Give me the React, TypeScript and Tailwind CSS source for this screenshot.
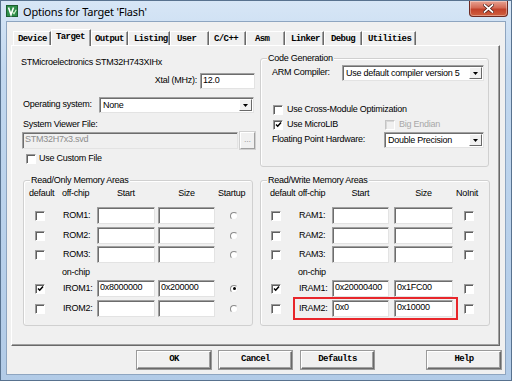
import React from 'react';

const sans = "font-['Liberation_Sans',Arial,sans-serif] text-[9px] tracking-[-0.25px] text-black";
const mono = "font-['Liberation_Mono','Courier_New',monospace] text-[9px] font-bold tracking-[-0.6px] text-black";

const tabs = [
  { label: 'Device', w: 'w-[38px]', pl: 'pl-[4px]' },
  { label: 'Target', w: 'w-[40px]', pl: 'pl-[4px]', active: true },
  { label: 'Output', w: 'w-[37px]', pl: 'pl-[3px]' },
  { label: 'Listing', w: 'w-[42px]', pl: 'pl-[5px]' },
  { label: 'User', w: 'w-[39px]', pl: 'pl-[6px]' },
  { label: 'C/C++', w: 'w-[37px]', pl: 'pl-[4px]' },
  { label: 'Asm', w: 'w-[39px]', pl: 'pl-[8px]' },
  { label: 'Linker', w: 'w-[39px]', pl: 'pl-[5px]' },
  { label: 'Debug', w: 'w-[38px]', pl: 'pl-[6px]' },
  { label: 'Utilities', w: 'w-[54px]', pl: 'pl-[5px]' },
];

function Check({ on, disabled }: { on?: boolean; disabled?: boolean }) {
  return (
    <div
      className={`w-[10px] h-[10px] shrink-0 border flex items-center justify-center ${
        disabled
          ? 'bg-[#f0f0f0] border-t-[#c4c4c4] border-l-[#c4c4c4] border-b-white border-r-white shadow-[inset_1px_1px_0_#d8d8d8]'
          : 'bg-white border-t-[#9a9a9a] border-l-[#9a9a9a] border-b-white border-r-white shadow-[inset_1px_1px_0_#5f5f5f]'
      }`}
    >
      {on && (
        <svg width="7" height="7" viewBox="0 0 7 7">
          <path d="M1 3.4 L2.7 5.2 L6 1.4" stroke="#000" strokeWidth="1.5" fill="none" />
        </svg>
      )}
    </div>
  );
}

function Radio({ on }: { on?: boolean }) {
  return (
    <div className="w-[8px] h-[8px] rounded-full bg-white border border-t-[#8a8a8a] border-l-[#8a8a8a] border-b-[#eeeeee] border-r-[#eeeeee] flex items-center justify-center">
      {on && <div className="w-[3px] h-[3px] rounded-full bg-black" />}
    </div>
  );
}

function Field({ className, value, disabled }: { className: string; value?: string; disabled?: boolean }) {
  return (
    <div
      className={`h-[17px] shrink-0 border border-t-[#a0a0a0] border-l-[#a0a0a0] border-b-[#e3e3e3] border-r-[#e3e3e3] shadow-[inset_1px_1px_0_#6d6d6d] pl-[2px] leading-[13px] ${
        disabled ? 'bg-[#f0f0f0] text-[#8d8d8d]' : 'bg-white'
      } ${className}`}
    >
      {value}
    </div>
  );
}

function Select({ className, value }: { className: string; value: string }) {
  return (
    <div
      className={`h-[16px] shrink-0 bg-white border border-t-[#a0a0a0] border-l-[#a0a0a0] border-b-[#e3e3e3] border-r-[#e3e3e3] shadow-[inset_1px_1px_0_#6d6d6d] flex ${className}`}
    >
      <span className="flex-1 pl-[3px] leading-[14px] truncate">{value}</span>
      <div className="w-[13px] my-[1px] mr-[1px] bg-[#f0f0f0] border border-t-white border-l-white border-b-[#696969] border-r-[#696969] flex items-center justify-center">
        <svg width="5" height="3" viewBox="0 0 5 3">
          <path d="M0 0H5L2.5 3Z" fill="#000" />
        </svg>
      </div>
    </div>
  );
}

function Group({ title, className, children }: { title: string; className: string; children?: React.ReactNode }) {
  return (
    <div className={`border border-[#d0d0d0] rounded-[3px] shadow-[inset_1px_1px_0_#ffffff] ${className}`}>
      <div className="-mt-[7px] ml-[6px] px-[1px] w-fit h-[13px] leading-[13px] bg-[#f0f0f0]">{title}</div>
      {children}
    </div>
  );
}

function Button({ label, className }: { label: string; className: string }) {
  return (
    <div
      className={`h-[18px] bg-[#f0f0f0] border border-t-white border-l-white border-b-[#696969] border-r-[#696969] shadow-[inset_-1px_-1px_0_#a0a0a0,0_0_0_1px_#9a9a9a] flex items-center justify-center ${mono} ${className}`}
    >
      {label}
    </div>
  );
}

const romRows = [
  { label: 'ROM1:', mt: 'mt-[7px]' },
  { label: 'ROM2:', mt: 'mt-[3px]' },
  { label: 'ROM3:', mt: 'mt-[2px]' },
];

const ramRows = [
  { label: 'RAM1:', mt: 'mt-[7px]' },
  { label: 'RAM2:', mt: 'mt-[3px]' },
  { label: 'RAM3:', mt: 'mt-[2px]' },
];

function RomRow({ label, mt, start, size, checked, startup }: { label: string; mt: string; start?: string; size?: string; checked?: boolean; startup?: boolean }) {
  return (
    <div className={`grid grid-cols-[33px_35px_61px_60px_1fr] items-center h-[17px] ${mt}`}>
      <div className="pl-[6px]"><Check on={checked} /></div>
      <div className="pl-[1px]">{label}</div>
      <Field className="w-[58px]" value={start} />
      <Field className="w-[57px]" value={size} />
      <div className="pl-[12px]"><Radio on={startup} /></div>
    </div>
  );
}

function RamRow({ label, mt, start, size, checked }: { label: string; mt: string; start?: string; size?: string; checked?: boolean }) {
  return (
    <div className={`grid grid-cols-[28px_34px_62px_62px_1fr] items-center h-[17px] ${mt}`}>
      <div className="pl-[1px]"><Check on={checked} /></div>
      <div className="pl-[1px]">{label}</div>
      <Field className="w-[57px]" value={start} />
      <Field className="w-[59px]" value={size} />
      <div className="pl-[8px]"><Check /></div>
    </div>
  );
}

function TitleIcon() {
  return (
    <svg width="12" height="12" viewBox="0 0 12 12">
      <rect x="0.5" y="0.5" width="11" height="11" fill="#2f8f4a" stroke="#1d5e30" />
      <path d="M2.5 2.5 L5 9.5 L7.5 2.5" stroke="#fff" strokeWidth="1.6" fill="none" />
      <path d="M6.5 7 L8 8.8 L10.2 4.8" stroke="#d9f5d0" strokeWidth="1.1" fill="none" />
    </svg>
  );
}

export default function App() {
  return (
    <div className="w-[512px] h-[381px] overflow-hidden border border-[#58728f] bg-[linear-gradient(180deg,#d7e6f6_0%,#c2d8ef_18%,#b9d1eb_60%,#b2cbe7_100%)]">
      {/* title bar */}
      <div className="h-[20px] flex items-start">
        <div className="ml-[5px] mt-[4px]"><TitleIcon /></div>
        <div className="ml-[5px] mt-[4px] h-[14px] leading-[14px] font-['Noto_Sans',sans-serif] text-[11px] tracking-[-0.2px] text-black">
          Options for Target 'Flash'
        </div>
        <div className="ml-auto mr-[3px] w-[39px] h-[16px] rounded-b-[4px] border border-t-0 border-[#6e2a22] bg-[linear-gradient(180deg,#e8a393_0%,#d46a55_45%,#c2422b_55%,#d0603f_100%)] shadow-[inset_0_0_0_1px_rgba(255,255,255,0.35)] flex items-center justify-center">
          <svg width="11" height="9" viewBox="0 0 11 9">
            <path d="M1.5 1 L9.5 8 M9.5 1 L1.5 8" stroke="#4a1a14" strokeWidth="3.2" strokeLinecap="square" />
            <path d="M1.5 1 L9.5 8 M9.5 1 L1.5 8" stroke="#ffffff" strokeWidth="1.7" strokeLinecap="square" />
          </svg>
        </div>
      </div>

      {/* client area */}
      <div className={`mx-[5px] h-[354px] border border-[#8ea5c0] bg-[#f0f0f0] ${sans}`}>
        {/* tab strip */}
        <div className="relative z-10 pt-[6px] pl-[6px] h-[23px] flex items-end">
          {tabs.map((t) =>
            t.active ? (
              <div
                key={t.label}
                className={`${t.w} ${t.pl} h-[17px] -mb-[1px] bg-[#f0f0f0] border-t border-l border-r border-t-white border-l-white border-r-[#696969] shadow-[inset_-1px_0_0_#a0a0a0] pt-[2px] leading-[10px] ${mono}`}
              >
                {t.label}
              </div>
            ) : (
              <div
                key={t.label}
                className={`${t.w} ${t.pl} h-[14px] border-t border-l border-r border-t-white border-l-white border-r-[#696969] shadow-[inset_-1px_0_0_#a0a0a0] pt-[2px] leading-[10px] ${mono}`}
              >
                {t.label}
              </div>
            )
          )}
        </div>

        {/* tab page */}
        <div className="ml-[4px] w-[489px] h-[301px] border border-t-white border-l-white border-r-[#696969] border-b-[#696969] shadow-[inset_-1px_-1px_0_#a0a0a0]">
          <div className="h-[134px] flex items-start pl-[9px]">
            {/* left info */}
            <div className="w-[234px] pt-[10px] flex flex-col">
              <div className="h-[13px] leading-[13px]">STMicroelectronics STM32H743XIHx</div>
              <div className="mt-[4px] h-[16px] flex items-center justify-end">
                <span className="mr-[3px]">Xtal (MHz):</span>
                <Field className="w-[55px] !h-[16px]" value="12.0" />
              </div>
              <div className="mt-[8px] h-[16px] flex items-center">
                <span className="pl-[2px] w-[78px]">Operating system:</span>
                <Select className="w-[155px]" value="None" />
              </div>
              <div className="mt-[5px] h-[13px] leading-[13px] pl-[2px]">System Viewer File:</div>
              <div className="mt-[1px] h-[17px] flex">
                <Field className="ml-[1px] w-[216px]" value="STM32H7x3.svd" disabled />
                <div className="ml-[2px] w-[15px] h-[17px] bg-[#f0f0f0] border border-t-white border-l-white border-b-[#a0a0a0] border-r-[#a0a0a0] shadow-[0_0_0_1px_#d0d0d0] text-[#a0a0a0] leading-[13px] text-center">
                  ...
                </div>
              </div>
              <div className="mt-[3px] h-[13px] flex items-center pl-[5px]">
                <Check />
                <span className="ml-[3px]">Use Custom File</span>
              </div>
            </div>

            {/* code generation */}
            <div className="ml-[5px] pt-[12px]">
              <Group title="Code Generation" className="w-[229px] h-[109px]">
                <div className="h-[16px] flex items-center pl-[11px]">
                  <span className="w-[70px]">ARM Compiler:</span>
                  <Select className="w-[142px]" value="Use default compiler version 5" />
                </div>
                <div className="mt-[22px] h-[13px] flex items-center pl-[12px]">
                  <Check />
                  <span className="ml-[4px]">Use Cross-Module Optimization</span>
                </div>
                <div className="mt-[2px] h-[13px] flex items-center pl-[12px]">
                  <Check on />
                  <span className="ml-[4px] w-[98px]">Use MicroLIB</span>
                  <Check disabled />
                  <span className="ml-[4px] text-[#a8a8a8]">Big Endian</span>
                </div>
                <div className="mt-[1px] h-[16px] flex items-center pl-[11px]">
                  <span className="w-[112px]">Floating Point Hardware:</span>
                  <Select className="w-[100px]" value="Double Precision" />
                </div>
              </Group>
            </div>
          </div>

          {/* memory areas */}
          <div className="flex pl-[9px]">
            <Group title="Read/Only Memory Areas" className="ml-[2px] w-[230px] h-[146px]">
              <div className="pl-[5px]">
                <div className="grid grid-cols-[33px_35px_61px_60px_1fr] items-center h-[13px] leading-[13px]">
                  <span>default</span>
                  <span>off-chip</span>
                  <span className="w-[58px] text-center">Start</span>
                  <span className="w-[57px] text-center">Size</span>
                  <span>Startup</span>
                </div>
                {romRows.map((r) => (
                  <RomRow key={r.label} label={r.label} mt={r.mt} />
                ))}
                <div className="mt-[3px] h-[13px] leading-[13px] pl-[33px]">on-chip</div>
                <RomRow label="IROM1:" mt="mt-[1px]" start="0x8000000" size="0x200000" checked startup />
                <RomRow label="IROM2:" mt="mt-[3px]" />
              </div>
            </Group>

            <Group title="Read/Write Memory Areas" className="relative ml-[7px] w-[230px] h-[146px]">
              <div className="pl-[9px]">
                <div className="grid grid-cols-[28px_34px_62px_62px_1fr] items-center h-[13px] leading-[13px]">
                  <span>default</span>
                  <span>off-chip</span>
                  <span className="w-[57px] text-center">Start</span>
                  <span className="w-[59px] text-center">Size</span>
                  <span>NoInit</span>
                </div>
                {ramRows.map((r) => (
                  <RamRow key={r.label} label={r.label} mt={r.mt} />
                ))}
                <div className="mt-[3px] h-[13px] leading-[13px] pl-[28px]">on-chip</div>
                <RamRow label="IRAM1:" mt="mt-[1px]" start="0x20000400" size="0x1FC00" checked />
                <RamRow label="IRAM2:" mt="mt-[3px]" start="0x0" size="0x10000" />
              </div>
              {/* highlight annotation */}
              <div className="absolute left-[32px] top-[116px] w-[165px] h-[23px] border-2 border-[#e8262b]" />
            </Group>
          </div>
        </div>

        {/* dialog buttons */}
        <div className="mt-[5px] flex pl-[130px]">
          <Button label="OK" className="w-[74px]" />
          <Button label="Cancel" className="ml-[8px] w-[73px]" />
          <Button label="Defaults" className="ml-[9px] w-[73px]" />
          <Button label="Help" className="ml-[53px] w-[74px]" />
        </div>
      </div>
    </div>
  );
}
